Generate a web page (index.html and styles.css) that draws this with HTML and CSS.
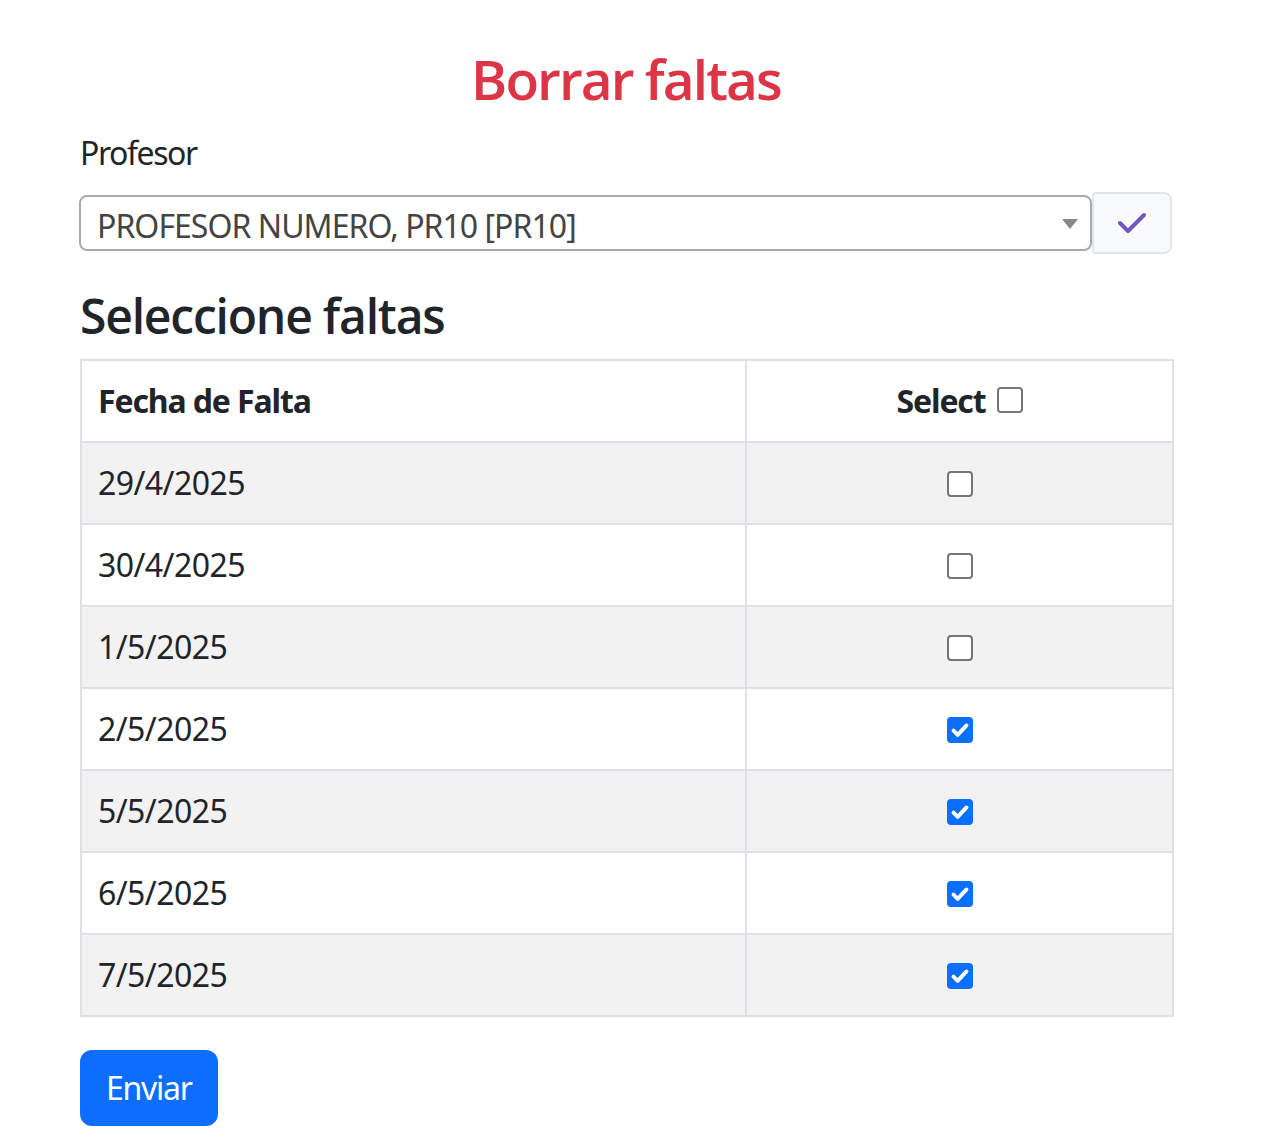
FILE: index.html
```html
<!DOCTYPE html>
<html lang="es">
<head>
<meta charset="utf-8">
<title>Borrar faltas</title>
<link rel="stylesheet" href="styles.css">
</head>
<body>
<div class="container">
  <h1 class="title">Borrar faltas</h1>
  <label class="label">Profesor</label>
  <div class="select-row">
    <div class="select">
      <span class="select-text">PROFESOR NUMERO, PR10 [PR10]</span>
      <span class="select-arrow"></span>
    </div>
    <button class="check-btn" type="button">
      <svg class="check-icon" viewBox="0 96 448 320" width="28" height="20"><path d="M438.6 105.4c12.5 12.5 12.5 32.8 0 45.3l-256 256c-12.5 12.5-32.8 12.5-45.3 0l-128-128c-12.5-12.5-12.5-32.8 0-45.3s32.8-12.5 45.3 0L160 338.7 393.4 105.4c12.5-12.5 32.8-12.5 45.3 0z" fill="currentColor"/></svg>
    </button>
  </div>
  <h3 class="subtitle">Seleccione faltas</h3>
  <table class="faltas">
    <colgroup><col class="c1"><col class="c2"></colgroup>
    <thead>
      <tr><th class="left">Fecha de Falta</th><th class="center"><span class="sel-head">Select <span class="cb"></span></span></th></tr>
    </thead>
    <tbody>
      <tr class="odd"><td>29/4/2025</td><td class="center"><span class="cb"></span></td></tr>
      <tr><td>30/4/2025</td><td class="center"><span class="cb"></span></td></tr>
      <tr class="odd"><td>1/5/2025</td><td class="center"><span class="cb"></span></td></tr>
      <tr><td>2/5/2025</td><td class="center"><span class="cb checked"><svg viewBox="0 0 20 20" width="26" height="26"><path d="M5 10.5l3.2 3.2L15 6.5" fill="none" stroke="#fff" stroke-width="3" stroke-linecap="round" stroke-linejoin="round"/></svg></span></td></tr>
      <tr class="odd"><td>5/5/2025</td><td class="center"><span class="cb checked"><svg viewBox="0 0 20 20" width="26" height="26"><path d="M5 10.5l3.2 3.2L15 6.5" fill="none" stroke="#fff" stroke-width="3" stroke-linecap="round" stroke-linejoin="round"/></svg></span></td></tr>
      <tr><td>6/5/2025</td><td class="center"><span class="cb checked"><svg viewBox="0 0 20 20" width="26" height="26"><path d="M5 10.5l3.2 3.2L15 6.5" fill="none" stroke="#fff" stroke-width="3" stroke-linecap="round" stroke-linejoin="round"/></svg></span></td></tr>
      <tr class="odd"><td>7/5/2025</td><td class="center"><span class="cb checked"><svg viewBox="0 0 20 20" width="26" height="26"><path d="M5 10.5l3.2 3.2L15 6.5" fill="none" stroke="#fff" stroke-width="3" stroke-linecap="round" stroke-linejoin="round"/></svg></span></td></tr>
    </tbody>
  </table>
  <button class="btn-enviar" type="submit">Enviar</button>
</div>
</body>
</html>
```
FILE: styles.css
```css
* { box-sizing: border-box; }
body {
  margin: 0;
  font-family: "Noto Sans", "Open Sans", sans-serif;
  color: #212529;
  background: #fff;
  letter-spacing: -0.035em;
}
.container {
  width: 1092px;
  margin-left: 80px;
  display: flex;
  flex-direction: column;
  align-items: flex-start;
}
.title {
  align-self: stretch;
  text-align: center;
  color: #dc3545;
  font-family: "Open Sans", "Noto Sans", sans-serif;
  font-size: 55px;
  line-height: 66px;
  font-weight: 600;
  letter-spacing: -0.035em;
  margin: 46px 0 0 0;
}
.label {
  font-size: 32px;
  line-height: 48px;
  letter-spacing: -0.045em;
  margin-top: 17px;
}
.select-row {
  margin-top: 15px;
  display: flex;
  align-items: center;
  align-self: stretch;
}
.select {
  flex: 1;
  height: 56px;
  border: 2px solid #aaa;
  border-radius: 8px;
  background: #fff;
  display: flex;
  align-items: flex-start;
  justify-content: space-between;
  padding: 6px 0 0 16px;
  margin-left: -1px;
}
.select-text {
  font-size: 32px;
  line-height: 46px;
  letter-spacing: -0.03em;
  color: #444;
  white-space: nowrap;
}
.select-arrow {
  width: 0;
  height: 0;
  border-style: solid;
  border-width: 10px 8px 0 8px;
  border-color: #888 transparent transparent transparent;
  margin: 16px 12px 0 0;
}
.check-btn {
  width: 80px;
  height: 62px;
  border: 2px solid #e3e5ea;
  border-radius: 4px 8px 8px 4px;
  background: #f8f9fa;
  display: flex;
  align-items: center;
  justify-content: center;
  padding: 0;
  color: #7453c9;
}
.check-icon { display: block; }
.subtitle {
  font-family: "Open Sans", "Noto Sans", sans-serif;
  font-size: 48px;
  line-height: 58px;
  font-weight: 560;
  letter-spacing: -0.025em;
  margin: 33px 0 0 0;
}
.faltas {
  margin-top: 14px;
  width: 1092px;
  table-layout: fixed;
  border-collapse: collapse;
  font-size: 32px;
  line-height: 48px;
}
.c1 { width: 665px; }
.c2 { width: 427px; }
.faltas th, .faltas td {
  border: 2px solid #dee2e6;
  padding: 16px 16px;
  vertical-align: middle;
  text-align: left;
  height: 82px;
}
.faltas th { font-weight: 700; letter-spacing: -0.035em; }
.faltas .center { text-align: center; }
.faltas tr.odd td { background: #f2f2f2; }
.sel-head {
  display: inline-flex;
  align-items: center;
  gap: 11px;
}
.cb {
  display: inline-block;
  vertical-align: middle;
  width: 26px;
  height: 26px;
  border: 2px solid #767676;
  border-radius: 4px;
  background: #fff;
  position: relative;
  top: -2px;
}
.sel-head .cb { top: -1px; }
.cb.checked {
  background: #0b6ffd;
  border-color: #0b6ffd;
}
.cb.checked svg {
  display: block;
  margin: -2px;
}
.btn-enviar {
  margin-top: 33px;
  font-family: inherit;
  font-size: 32px;
  line-height: 48px;
  letter-spacing: -0.04em;
  padding: 12px 24px;
  border: 2px solid #0d6efd;
  border-radius: 12px;
  background: #0d6efd;
  color: #fff;
}
```
